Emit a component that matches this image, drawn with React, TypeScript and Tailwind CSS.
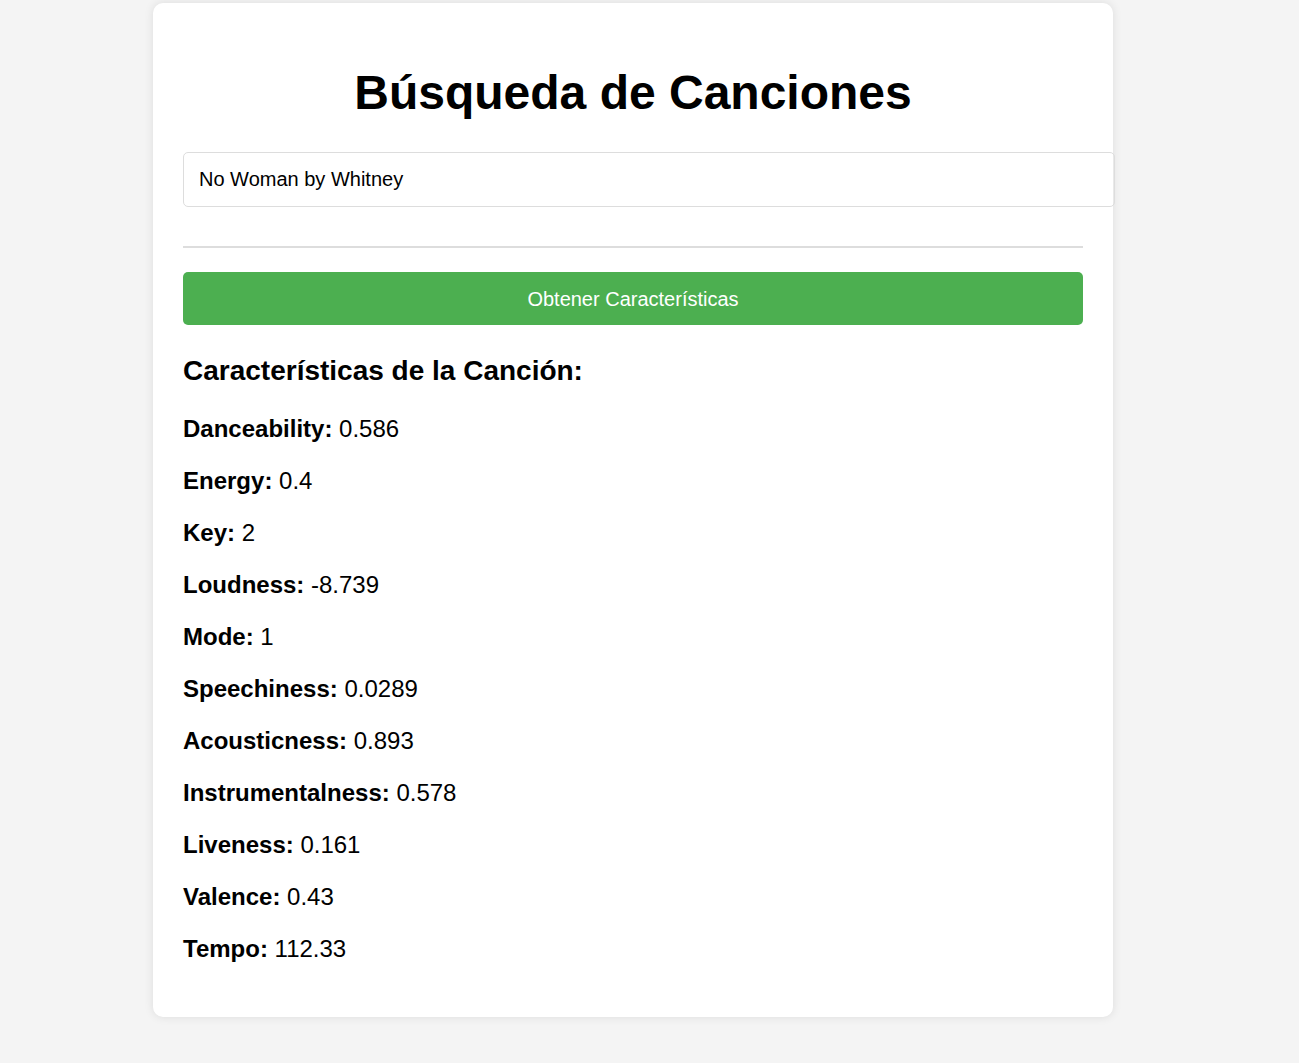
import React, { useState } from 'react';

const features: [string, string][] = [
    ['Danceability', '0.586'],
    ['Energy', '0.4'],
    ['Key', '2'],
    ['Loudness', '-8.739'],
    ['Mode', '1'],
    ['Speechiness', '0.0289'],
    ['Acousticness', '0.893'],
    ['Instrumentalness', '0.578'],
    ['Liveness', '0.161'],
    ['Valence', '0.43'],
    ['Tempo', '112.33'],
];

export default function App() {
    const [query, setQuery] = useState('No Woman by Whitney');

    return (
        <div className="min-h-screen bg-[#f4f4f4] pl-[153px] pt-[3px] pb-[46px] font-['Liberation_Sans',Arial,sans-serif] text-black">
            <div className="w-[960px] rounded-[10px] bg-white p-[30px] shadow-[0_0_10px_rgba(0,0,0,0.1)]">
                <h1 className="mt-[32px] mb-[32px] text-center text-[48px] font-bold leading-[55px]">
                    Búsqueda de Canciones
                </h1>

                <input
                    value={query}
                    onChange={(e) => setQuery(e.target.value)}
                    className="block h-[55px] w-[932px] rounded-[5px] border border-[#dddddd] px-[15px] text-[20px] text-black outline-none"
                />

                <div className="mt-[39px] mb-[24px] border-t-2 border-[#dddddd]" />

                <button className="block h-[53px] w-full rounded-[5px] bg-[#4caf50] text-[20px] text-white">
                    Obtener Características
                </button>

                <h3 className="mt-[30px] mb-[28px] text-[28px] font-bold leading-[32px]">
                    Características de la Canción:
                </h3>

                <div className="flex flex-col gap-[24px] pb-[24px]">
                    {features.map(([label, value]) => (
                        <p key={label} className="text-[24px] leading-[28px]">
                            <strong className="font-bold">{label}:</strong> {value}
                        </p>
                    ))}
                </div>
            </div>
        </div>
    );
}
